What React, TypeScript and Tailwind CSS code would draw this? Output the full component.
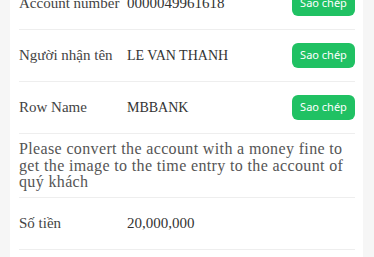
import React from "react";

const serif = { fontFamily: '"Liberation Serif", serif' };

function Row({
  label,
  value,
  copy,
  valueSize = "text-[15px]",
}: {
  label: string;
  value: string;
  copy?: boolean;
  valueSize?: string;
}) {
  return (
    <div className="flex h-[52px] items-center border-b border-[#eeeeee]">
      <div className="w-[108px] shrink-0 whitespace-nowrap text-[15px] text-[#444]">{label}</div>
      <div className={`flex-1 whitespace-nowrap text-[#333] ${valueSize}`}>{value}</div>
      {copy && (
        <button
          className="h-[25px] w-[63px] rounded-[6px] bg-[#20c163] text-[11px] text-white"
          style={{ fontFamily: '"Noto Sans", sans-serif' }}
        >
          Sao chép
        </button>
      )}
    </div>
  );
}

export default function App() {
  return (
    <div className="h-[257px] overflow-hidden bg-[#f6f6f6] pl-[10px] pr-[11px]" style={serif}>
      <div className="-mt-[22px] bg-white pl-[9px] pr-[8px]">
        <Row label="Account number" value="0000049961618" copy />
        <Row label="Người nhận tên" value="LE VAN THANH" copy valueSize="text-[14px]" />
        <Row label="Row Name" value="MBBANK" copy valueSize="text-[14px]" />
        <div className="border-b border-[#eeeeee] pb-[6px] pt-[7px] text-[16px] leading-[16.5px] tracking-[0.36px] text-[#555]">
          Please convert the account with a money fine to get the image to the time entry to the account of quý khách
        </div>
        <Row label="Số tiền" value="20,000,000" />
        <div className="h-[52px]" />
      </div>
    </div>
  );
}
